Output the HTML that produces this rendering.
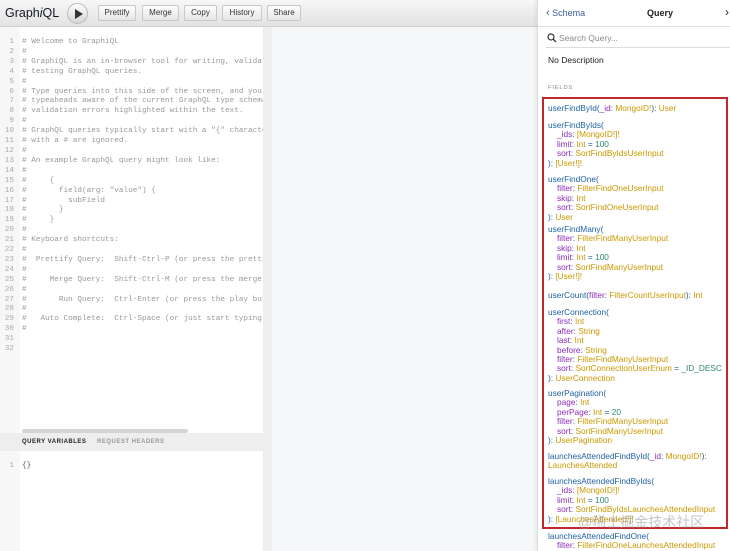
<!DOCTYPE html>
<html><head><meta charset="utf-8"><style>
*{margin:0;padding:0;box-sizing:border-box}
body{width:730px;height:551px;overflow:hidden;position:relative;background:#fff;font-family:"Liberation Sans",sans-serif}
.tb{position:absolute;left:0;top:0;width:537px;height:27px;background:linear-gradient(#f7f7f7,#e2e2e2);border-bottom:1px solid #d0d0d0}
.logo{position:absolute;left:5px;top:6px;font-size:12.5px;color:#141823}
.play{position:absolute;left:67px;top:3px;width:21px;height:21px;border-radius:50%;background:linear-gradient(#fdfdfd,#d6d6d6);border:1px solid #bbb}
.play:after{content:"";position:absolute;left:7px;top:5px;border-left:8px solid #333;border-top:5px solid transparent;border-bottom:5px solid transparent}
.btn{position:absolute;top:5px;height:16px;background:linear-gradient(#fdfdfd,#e6e6e6);border:1px solid #c8c8c8;border-radius:2px;font-size:8px;color:#333;text-align:center;line-height:14px}
.gut{position:absolute;left:0;top:27px;width:20px;height:524px;background:#f7f7f7}
.ed{position:absolute;left:20px;top:27px;width:243px;height:406px;background:#fff;overflow:hidden}
.mono{font-family:"Liberation Mono",monospace;font-size:7.7px;line-height:9.9px;color:#999;white-space:pre}
.ln{position:absolute;left:0;width:14px;text-align:right;color:#aaa}
.strip{position:absolute;left:263px;top:27px;width:9px;height:524px;background:#eeeeee}
.res{position:absolute;left:272px;top:27px;width:265px;height:524px;background:#f6f7f8}
.vh{position:absolute;left:0;top:433px;width:263px;height:18px;background:#eeeeee;font-size:6px;letter-spacing:.5px;font-weight:bold;line-height:18px}
.docs{position:absolute;left:537px;top:0;width:193px;height:551px;background:#fff;border-left:1px solid #ddd;box-shadow:-2px 0 3px rgba(0,0,0,.06)}
.dh{position:absolute;left:0;top:0;width:193px;height:27px;border-bottom:1px solid #e0e0e0;font-size:9px}
.f{position:absolute;left:10px;font-size:8.3px;line-height:9.4px;white-space:nowrap;color:#1f61a0}
.a{color:#8b2bb9}.t{color:#ca9800}.v{color:#2a8a70}.p{color:#555}
.i{padding-left:9px}
</style></head><body>
<div class="tb">
<div class="logo">Graph<i>i</i>QL</div>
<div class="play"></div>
<div class="btn" style="left:98px;width:38px">Prettify</div>
<div class="btn" style="left:142px;width:37px">Merge</div>
<div class="btn" style="left:184px;width:33px">Copy</div>
<div class="btn" style="left:222px;width:40px">History</div>
<div class="btn" style="left:267px;width:34px">Share</div>
</div>
<div class="gut"></div>
<div class="mono ln" style="top:38px">1
2
3
4
5
6
7
8
9
10
11
12
13
14
15
16
17
18
19
20
21
22
23
24
25
26
27
28
29
30
31
32</div>
<div class="ed"><div class="mono" style="position:absolute;left:2px;top:11px"># Welcome to GraphiQL
#
# GraphiQL is an in-browser tool for writing, validating, and
# testing GraphQL queries.
#
# Type queries into this side of the screen, and you will see
# typeaheads aware of the current GraphQL type schema and live
# validation errors highlighted within the text.
#
# GraphQL queries typically start with a "{" character. Lines
# with a # are ignored.
#
# An example GraphQL query might look like:
#
#     {
#       field(arg: "value") {
#         subField
#       }
#     }
#
# Keyboard shortcuts:
#
#  Prettify Query:  Shift-Ctrl-P (or press the prettify button)
#
#     Merge Query:  Shift-Ctrl-M (or press the merge button)
#
#       Run Query:  Ctrl-Enter (or press the play button)
#
#   Auto Complete:  Ctrl-Space (or just start typing)
#</div>
<div style="position:absolute;left:2px;top:402px;width:166px;height:4px;border-radius:2px;background:#d4d4d4"></div>
</div>
<div class="vh"><span style="position:absolute;left:22px;color:#222">QUERY VARIABLES</span><span style="position:absolute;left:97px;color:#999">REQUEST HEADERS</span></div>
<div style="position:absolute;left:20px;top:451px;width:243px;height:100px;background:#fff"></div>
<div class="mono ln" style="top:462px">1</div>
<div class="mono" style="position:absolute;left:22px;top:462px;color:#555">{}</div>
<div class="strip"></div>
<div class="res"></div>
<div class="docs">
<div class="dh"><span style="position:absolute;left:8px;top:8px;color:#3b5998"><span style="font-size:11px;line-height:9px">&#8249;</span>&nbsp;Schema</span><span style="position:absolute;left:109px;top:8px;font-weight:bold;color:#222">Query</span><span style="position:absolute;left:187px;top:5px;font-size:12px;color:#222">&#8250;</span></div>
<svg style="position:absolute;left:9px;top:33px" width="10" height="10" viewBox="0 0 10 10"><circle cx="4" cy="4" r="3" fill="none" stroke="#333" stroke-width="1.2"/><path d="M6.2 6.2L9 9" stroke="#333" stroke-width="1.3"/></svg>
<div style="position:absolute;left:21px;top:33px;font-size:8.5px;color:#888">Search Query...</div>
<div style="position:absolute;left:8px;top:47px;width:185px;border-top:1px solid #ddd"></div>
<div style="position:absolute;left:10px;top:55px;font-size:8.5px;color:#222">No Description</div>
<div style="position:absolute;left:10px;top:85px;font-size:5.8px;letter-spacing:.8px;color:#888">FIELDS</div>
<div style="position:absolute;left:4px;top:97px;width:186px;height:432px;border:2px solid #c0282d"></div>
<div class="f" style="top:104px">userFindById(<span class="a">_id</span><span class="p">:</span> <span class="t">MongoID!</span>): <span class="t">User</span></div>
<div class="f" style="top:121px">userFindByIds(<div class="i"><span class="a">_ids</span>: <span class="t">[MongoID!]!</span></div><div class="i"><span class="a">limit</span>: <span class="t">Int</span> = <span class="v">100</span></div><div class="i"><span class="a">sort</span>: <span class="t">SortFindByIdsUserInput</span></div>): <span class="t">[User!]!</span></div>
<div class="f" style="top:175px">userFindOne(<div class="i"><span class="a">filter</span>: <span class="t">FilterFindOneUserInput</span></div><div class="i"><span class="a">skip</span>: <span class="t">Int</span></div><div class="i"><span class="a">sort</span>: <span class="t">SortFindOneUserInput</span></div>): <span class="t">User</span></div>
<div class="f" style="top:225px">userFindMany(<div class="i"><span class="a">filter</span>: <span class="t">FilterFindManyUserInput</span></div><div class="i"><span class="a">skip</span>: <span class="t">Int</span></div><div class="i"><span class="a">limit</span>: <span class="t">Int</span> = <span class="v">100</span></div><div class="i"><span class="a">sort</span>: <span class="t">SortFindManyUserInput</span></div>): <span class="t">[User!]!</span></div>
<div class="f" style="top:291px">userCount(<span class="a">filter</span>: <span class="t">FilterCountUserInput</span>): <span class="t">Int</span></div>
<div class="f" style="top:308px">userConnection(<div class="i"><span class="a">first</span>: <span class="t">Int</span></div><div class="i"><span class="a">after</span>: <span class="t">String</span></div><div class="i"><span class="a">last</span>: <span class="t">Int</span></div><div class="i"><span class="a">before</span>: <span class="t">String</span></div><div class="i"><span class="a">filter</span>: <span class="t">FilterFindManyUserInput</span></div><div class="i"><span class="a">sort</span>: <span class="t">SortConnectionUserEnum</span> = <span class="v">_ID_DESC</span></div>): <span class="t">UserConnection</span></div>
<div class="f" style="top:389px">userPagination(<div class="i"><span class="a">page</span>: <span class="t">Int</span></div><div class="i"><span class="a">perPage</span>: <span class="t">Int</span> = <span class="v">20</span></div><div class="i"><span class="a">filter</span>: <span class="t">FilterFindManyUserInput</span></div><div class="i"><span class="a">sort</span>: <span class="t">SortFindManyUserInput</span></div>): <span class="t">UserPagination</span></div>
<div class="f" style="top:452px">launchesAttendedFindById(<span class="a">_id</span>: <span class="t">MongoID!</span>):<br><span class="t">LaunchesAttended</span></div>
<div class="f" style="top:477px">launchesAttendedFindByIds(<div class="i"><span class="a">_ids</span>: <span class="t">[MongoID!]!</span></div><div class="i"><span class="a">limit</span>: <span class="t">Int</span> = <span class="v">100</span></div><div class="i"><span class="a">sort</span>: <span class="t">SortFindByIdsLaunchesAttendedInput</span></div>): <span class="t">[LaunchesAttended!]!</span></div>
<div class="f" style="top:532px">launchesAttendedFindOne(<div class="i"><span class="a">filter</span>: <span class="t">FilterFindOneLaunchesAttendedInput</span></div></div>
<div style="position:absolute;left:40px;top:512px;font-family:'Liberation Sans','Noto Sans CJK SC',sans-serif;font-size:14px;color:rgba(150,150,150,.55)">@稀土掘金技术社区</div>
</div>
</body></html>
